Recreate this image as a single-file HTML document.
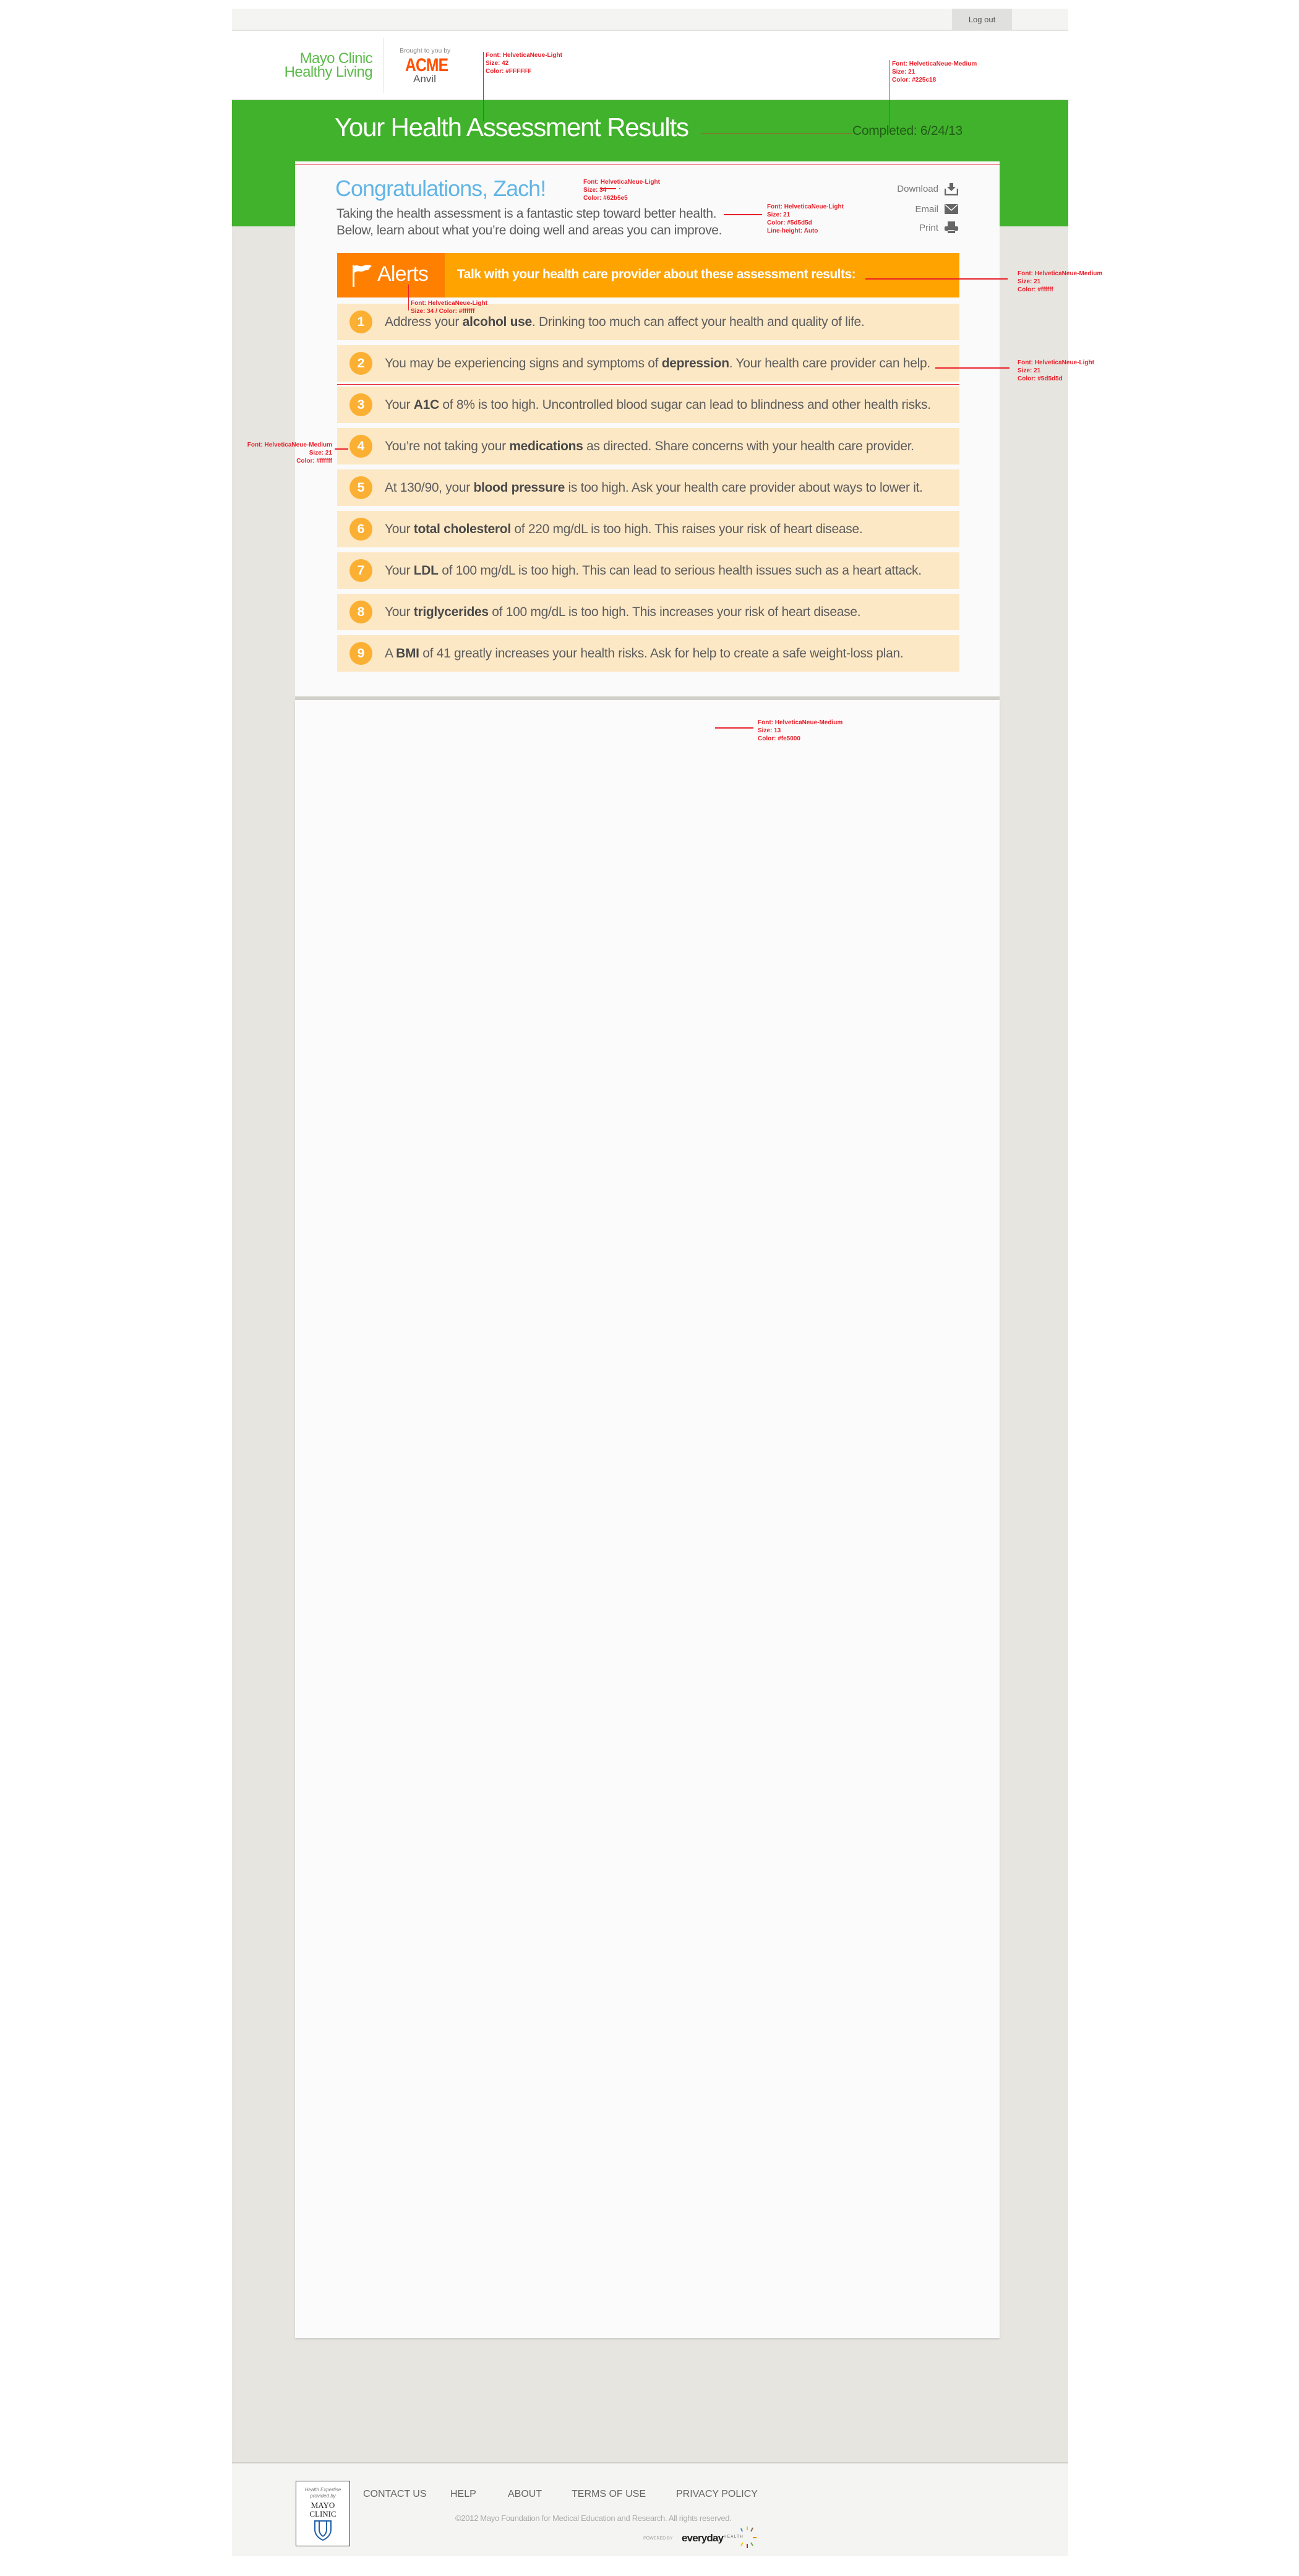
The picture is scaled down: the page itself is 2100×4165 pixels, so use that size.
<!DOCTYPE html>
<html><head><meta charset="utf-8">
<style>
*{margin:0;padding:0;box-sizing:border-box}
html,body{width:2100px;height:4165px;background:#fff;overflow:hidden}
body{position:relative;font-family:"Liberation Sans",Arial,sans-serif}
.a{position:absolute}
.ann{position:absolute;color:#e8202a;font-weight:bold;font-size:10px;line-height:13px;white-space:nowrap}
.rl{position:absolute;background:#e8202a}
.row{position:absolute;left:545px;width:1006px;height:59px;background:#fde8c6}
.num{position:absolute;left:20px;top:11px;width:37px;height:37px;border-radius:50%;background:#fbb034;color:#fff;font-size:21px;font-weight:bold;text-align:center;line-height:37px}
.rt{position:absolute;left:77px;top:0;line-height:59px;font-size:21px;color:#5d5d5d;white-space:nowrap;letter-spacing:-0.3px}
.rt b{color:#4a4a4a}
.fl{position:absolute;top:4024px;font-size:16px;color:#666;white-space:nowrap}
</style></head><body>
<!-- page container -->
<div class="a" style="left:375px;top:14px;width:1352px;height:4119px;background:#e6e5e0"></div>
<!-- top bar -->
<div class="a" style="left:375px;top:14px;width:1352px;height:35px;background:#f4f4f2;border-bottom:1px solid #dcdcd8"></div>
<div class="a" style="left:1539px;top:14px;width:97px;height:35px;background:#e0e0de;color:#555;font-size:13px;text-align:center;line-height:35px">Log out</div>
<!-- header -->
<div class="a" style="left:375px;top:50px;width:1352px;height:112px;background:#fff;border-bottom:1px solid #ccc"></div>
<div class="a" style="left:440px;top:84px;width:162px;text-align:right;color:#5cbb4a;font-size:24px;line-height:22px;letter-spacing:-0.6px">Mayo Clinic<br>Healthy Living</div>
<div class="a" style="left:619px;top:61px;width:1px;height:89px;background:#e4e4e4"></div>
<div class="a" style="left:646px;top:76px;font-size:10.5px;color:#888">Brought to you by</div>
<div class="a" style="left:655px;top:89px;font-size:30px;font-weight:bold;color:#fe5000;letter-spacing:-1px;transform:scaleX(0.82);transform-origin:left">ACME</div>
<div class="a" style="left:668px;top:118px;font-size:17px;color:#555">Anvil</div>
<!-- green band -->
<div class="a" style="left:375px;top:162px;width:1352px;height:204px;background:#41b22b"></div>
<div class="a" style="left:541px;top:182px;font-size:42px;color:#fff;letter-spacing:-1.2px;white-space:nowrap">Your Health Assessment Results</div>
<div class="a" style="left:1378px;top:200px;font-size:21px;color:#225c18;white-space:nowrap;letter-spacing:-0.3px">Completed: 6/24/13</div>
<!-- card 1 -->
<div class="a" style="left:477px;top:261px;width:1139px;height:865px;background:#fafafa"></div>
<div class="a" style="left:477px;top:1126px;width:1139px;height:6px;background:#d0d0c8"></div>
<div class="a" style="left:477px;top:1132px;width:1139px;height:2648px;background:#fbfbfb;box-shadow:0 2px 3px rgba(0,0,0,0.12)"></div>
<div class="a" style="left:542px;top:284px;font-size:36px;color:#62b5e5;letter-spacing:-1px;white-space:nowrap">Congratulations, Zach!</div>
<div class="a" style="left:544px;top:332px;font-size:21px;color:#5d5d5d;line-height:27px;letter-spacing:-0.4px;white-space:nowrap">Taking the health assessment is a fantastic step toward better health.<br>Below, learn about what you’re doing well and areas you can improve.</div>
<!-- side actions -->
<div class="a" style="left:1400px;top:297px;width:117px;text-align:right;font-size:15px;color:#777">Download</div>
<div class="a" style="left:1400px;top:330px;width:117px;text-align:right;font-size:15px;color:#777">Email</div>
<div class="a" style="left:1400px;top:360px;width:117px;text-align:right;font-size:15px;color:#777">Print</div>
<svg class="a" style="left:1527px;top:296px" width="22" height="20" viewBox="0 0 22 20"><path d="M8 0h6v6h4l-7 7-7-7h4z" fill="#666"/><path d="M1 9v10h20V9" fill="none" stroke="#666" stroke-width="2.5"/></svg>
<svg class="a" style="left:1527px;top:330px" width="22" height="16" viewBox="0 0 22 16"><rect width="22" height="16" rx="1" fill="#666"/><path d="M1 1l10 9 10-9" fill="none" stroke="#fff" stroke-width="1.5"/></svg>
<svg class="a" style="left:1527px;top:358px" width="22" height="19" viewBox="0 0 22 19"><rect x="5" y="0" width="12" height="8" fill="#666"/><rect x="0" y="8" width="22" height="7" rx="2" fill="#666"/><rect x="5" y="13" width="12" height="6" fill="#666"/><rect x="6" y="14" width="10" height="1" fill="#fff"/></svg>
<!-- alerts bar -->
<div class="a" style="left:545px;top:409px;width:174px;height:72px;background:#ff7f00"></div>
<div class="a" style="left:719px;top:409px;width:832px;height:72px;background:#ffa300"></div>
<svg class="a" style="left:570px;top:428px" width="34" height="36" viewBox="0 0 34 36"><rect x="0" y="1" width="3" height="35" fill="#fff"/><path d="M3 2c5-3 8 2 13 0 4-1 9-3 15 0-4 3-6 7-6 7-6-1-8 3-13 2-4-1-6 0-9 2z" fill="#fff"/></svg>
<div class="a" style="left:610px;top:424px;font-size:34px;color:#fff;letter-spacing:-0.8px">Alerts</div>
<div class="a" style="left:739px;top:432px;font-size:21px;font-weight:bold;color:#fff;white-space:nowrap;letter-spacing:-0.5px">Talk with your health care provider about these assessment results:</div>
<!-- rows -->
<div class="row" style="top:491px"><div class="num">1</div><div class="rt">Address your <b>alcohol use</b>. Drinking too much can affect your health and quality of life.</div></div>
<div class="row" style="top:558px"><div class="num">2</div><div class="rt">You may be experiencing signs and symptoms of <b>depression</b>. Your health care provider can help.</div></div>
<div class="row" style="top:625px"><div class="num">3</div><div class="rt">Your <b>A1C</b> of 8% is too high. Uncontrolled blood sugar can lead to blindness and other health risks.</div></div>
<div class="row" style="top:692px"><div class="num">4</div><div class="rt">You’re not taking your <b>medications</b> as directed. Share concerns with your health care provider.</div></div>
<div class="row" style="top:759px"><div class="num">5</div><div class="rt">At 130/90, your <b>blood pressure</b> is too high. Ask your health care provider about ways to lower it.</div></div>
<div class="row" style="top:826px"><div class="num">6</div><div class="rt">Your <b>total cholesterol</b> of 220 mg/dL is too high. This raises your risk of heart disease.</div></div>
<div class="row" style="top:893px"><div class="num">7</div><div class="rt">Your <b>LDL</b> of 100 mg/dL is too high. This can lead to serious health issues such as a heart attack.</div></div>
<div class="row" style="top:960px"><div class="num">8</div><div class="rt">Your <b>triglycerides</b> of 100 mg/dL is too high. This increases your risk of heart disease.</div></div>
<div class="row" style="top:1027px"><div class="num">9</div><div class="rt">A <b>BMI</b> of 41 greatly increases your health risks. Ask for help to create a safe weight-loss plan.</div></div>
<!-- annotations -->
<div class="rl" style="left:781px;top:84px;width:1px;height:112px"></div>
<div class="ann" style="left:785px;top:83px">Font: HelveticaNeue-Light<br>Size: 42<br>Color: #FFFFFF</div>
<div class="rl" style="left:1438px;top:97px;width:1px;height:112px"></div>
<div class="ann" style="left:1442px;top:97px">Font: HelveticaNeue-Medium<br>Size: 21<br>Color: #225c18</div>
<div class="rl" style="left:1133px;top:216px;width:245px;height:1px"></div>
<div class="rl" style="left:1001px;top:304px;width:2px;height:1px"></div>
<div class="rl" style="left:970px;top:304px;width:26px;height:2px"></div>
<div class="ann" style="left:943px;top:288px">Font: HelveticaNeue-Light<br>Size: 34<br>Color: #62b5e5</div>
<div class="rl" style="left:1170px;top:346px;width:62px;height:2px"></div>
<div class="ann" style="left:1240px;top:328px">Font: HelveticaNeue-Light<br>Size: 21<br>Color: #5d5d5d<br>Line-height: Auto</div>
<div class="rl" style="left:1399px;top:450px;width:230px;height:2px"></div>
<div class="ann" style="left:1645px;top:436px">Font: HelveticaNeue-Medium<br>Size: 21<br>Color: #ffffff</div>
<div class="rl" style="left:1512px;top:594px;width:120px;height:2px"></div>
<div class="ann" style="left:1645px;top:580px">Font: HelveticaNeue-Light<br>Size: 21<br>Color: #5d5d5d</div>
<div class="rl" style="left:660px;top:460px;width:1px;height:42px"></div>
<div class="ann" style="left:664px;top:484px">Font: HelveticaNeue-Light<br>Size: 34 / Color: #ffffff</div>
<div class="rl" style="left:541px;top:725px;width:22px;height:2px"></div>
<div class="ann" style="left:380px;top:713px;text-align:right;width:157px">Font: HelveticaNeue-Medium<br>Size: 21<br>Color: #ffffff</div>
<div class="rl" style="left:545px;top:621px;width:1006px;height:1px"></div>
<div class="rl" style="left:1156px;top:1176px;width:62px;height:2px"></div>
<div class="ann" style="left:1225px;top:1162px">Font: HelveticaNeue-Medium<br>Size: 13<br>Color: #fe5000</div>
<div class="rl" style="left:477px;top:266px;width:1139px;height:1px"></div>
<!-- footer -->
<div class="a" style="left:375px;top:3981px;width:1352px;height:152px;background:#f4f4f2;border-top:2px solid #cfcfc8"></div>
<div class="a" style="left:478px;top:4011px;width:88px;height:106px;border:1px solid #333;background:#fff;text-align:center">
<div style="font-size:8px;font-style:italic;color:#777;margin-top:9px;line-height:10px">Health Expertise<br>provided by</div>
<div style="font-family:'Liberation Serif',serif;font-size:13px;color:#222;line-height:14px;margin-top:3px">MAYO<br>CLINIC</div>
<svg width="30" height="34" viewBox="0 0 30 34" style="margin-top:2px"><path d="M2 2h26v14c0 8-6 14-13 17C8 30 2 24 2 16z" fill="none" stroke="#1f5fa8" stroke-width="2"/><path d="M9 2v14c0 5 3 9 6 11M21 2v14c0 5-3 9-6 11" fill="none" stroke="#1f5fa8" stroke-width="2"/></svg>
</div>
<div class="fl" style="left:587px">CONTACT US</div>
<div class="fl" style="left:728px">HELP</div>
<div class="fl" style="left:821px">ABOUT</div>
<div class="fl" style="left:924px">TERMS OF USE</div>
<div class="fl" style="left:1093px">PRIVACY POLICY</div>
<div class="a" style="left:736px;top:4064px;font-size:13px;color:#aaa;white-space:nowrap;letter-spacing:-0.3px">©2012 Mayo Foundation for Medical Education and Research. All rights reserved.</div>
<div class="a" style="left:1040px;top:4101px;font-size:7px;color:#999">POWERED BY</div>
<div class="a" style="left:1102px;top:4094px;font-size:17px;font-weight:bold;color:#222;letter-spacing:-0.8px">everyday</div>
<div class="a" style="left:1170px;top:4099px;font-size:6px;color:#555;letter-spacing:1.5px">HEALTH</div>
<svg class="a" style="left:1192px;top:4085px" width="32" height="36" viewBox="0 0 32 36"><path d="M8 8l-2-5" stroke="#2a8fd0" stroke-width="2"/><path d="M16 6V0" stroke="#f0c300" stroke-width="2"/><path d="M22 8l3-6" stroke="#8a6f5a" stroke-width="2"/><path d="M25 18h6" stroke="#f08a00" stroke-width="2"/><path d="M22 26l3 5" stroke="#6aa84f" stroke-width="2"/><path d="M16 28v7" stroke="#d0201c" stroke-width="2"/><path d="M9 26l-3 5" stroke="#f0c300" stroke-width="2"/></svg>
</body></html>
